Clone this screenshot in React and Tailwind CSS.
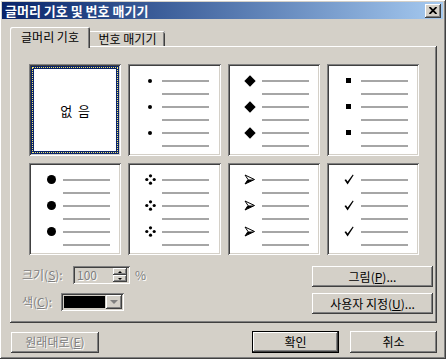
import React from "react";

// 윈도우 클래식 테두리
const raised =
  "shadow-[inset_-1px_-1px_#404040,inset_1px_1px_#ffffff,inset_-2px_-2px_#808080,inset_2px_2px_#d4d0c8]";
const sunken =
  "shadow-[inset_1px_1px_#808080,inset_-1px_-1px_#ffffff,inset_2px_2px_#404040,inset_-2px_-2px_#d4d0c8]";
const disabled = "text-[#808080] [text-shadow:1px_1px_0_#ffffff]";

const kinds = ["none", "dot", "diamond", "square", "circle", "fourdiamond", "arrow", "check"];

function Bullet({ kind }) {
  if (kind === "dot") return <span className="block w-[4px] h-[4px] rounded-full bg-black" />;
  if (kind === "diamond") return <span className="block w-[8px] h-[8px] rotate-45 bg-black" />;
  if (kind === "square") return <span className="block w-[5px] h-[5px] bg-black" />;
  if (kind === "circle") return <span className="block w-[9px] h-[9px] rounded-full bg-black" />;
  if (kind === "fourdiamond")
    return (
      <svg width="11" height="11" viewBox="0 0 11 11">
        <circle cx="5.5" cy="1.8" r="1.6" fill="#000" />
        <circle cx="5.5" cy="9.2" r="1.6" fill="#000" />
        <circle cx="1.8" cy="5.5" r="1.6" fill="#000" />
        <circle cx="9.2" cy="5.5" r="1.6" fill="#000" />
      </svg>
    );
  if (kind === "arrow")
    return (
      <svg width="11" height="11" viewBox="0 0 11 11">
        <path d="M1 1 L10.5 5.5 L1 10 L4 5.5 Z" fill="#fff" stroke="#000" strokeWidth="1" strokeLinejoin="miter" />
        <path d="M4 5.5 L10.5 5.5 L1 10 Z" fill="#000" />
      </svg>
    );
  if (kind === "check")
    return (
      <svg width="10" height="11" viewBox="0 0 10 11">
        <path d="M0.5 6 L2 5.3 L3.6 7.6 L8.8 0.5 L9.6 1.2 L3.6 10.4 Z" fill="#000" />
      </svg>
    );
  return null;
}

function Cell({ kind }) {
  if (kind === "none")
    return (
      <div className={`h-[92px] p-[2px] bg-white ${sunken}`}>
        <div className="h-full p-px bg-[#0a246a]">
          <div className="h-full border border-dotted border-[#f2e86a]">
            <div className="h-full border border-[#0a246a] bg-white flex items-center justify-center text-[13px] text-black tracking-[6px] pl-[6px]">
              없음
            </div>
          </div>
        </div>
      </div>
    );
  return (
    <div className={`h-[92px] p-[2px] bg-white ${sunken}`}>
      <div className="flex flex-col pt-[8px] pl-[12px]">
        {[0, 1, 2, 3, 4, 5].map((i) => (
          <div key={i} className="flex items-center h-[13px]">
            <span className="w-[16px] flex justify-center">{i % 2 === 0 && <Bullet kind={kind} />}</span>
            <span className="ml-[4px] w-[47px] h-[2px] bg-[#a6a6a6]" />
          </div>
        ))}
      </div>
    </div>
  );
}

function Btn({ children, className = "", dim = false, isDefault = false }) {
  const inner = (
    <div
      className={`h-full flex items-center justify-center bg-[#d4d0c8] ${raised} ${dim ? disabled : "text-black"}`}
    >
      {children}
    </div>
  );
  if (isDefault)
    return <div className={`border border-black ${className}`}>{inner}</div>;
  return <div className={className}>{inner}</div>;
}

export default function App() {
  return (
    <div
      className={`w-[446px] h-[359px] bg-[#d4d0c8] flex flex-col pt-[2px] pl-[2px] pr-[3px] pb-[3px] text-[12px] leading-none font-['Noto_Sans_CJK_KR','Noto_Sans',sans-serif] ${raised}`}
    >
      {/* 제목 표시줄 */}
      <div className="h-[17px] flex items-center justify-between pl-[3px] pr-[2px] bg-linear-to-r from-[#0a246a] to-[#a6caf0]">
        <span className="text-white font-bold text-[13px]">글머리 기호 및 번호 매기기</span>
        <div className={`w-[16px] h-[14px] flex items-center justify-center bg-[#d4d0c8] ${raised}`}>
          <svg width="8" height="7" viewBox="0 0 8 7">
            <path d="M0.5 0 L7.5 7 M7.5 0 L0.5 7" stroke="#000" strokeWidth="1.8" />
          </svg>
        </div>
      </div>

      <div className="flex flex-col pl-[8px] pr-[6px] pt-[8px]">
        {/* 탭 */}
        <div className="flex items-end h-[19px]">
          <div className="relative z-10 -mb-[2px] w-[80px] h-[21px] pb-[2px] flex items-center justify-center bg-[#d4d0c8] rounded-t-[2px] shadow-[inset_1px_1px_#ffffff,inset_-1px_0_#404040,inset_-2px_0_#808080]">
            글머리 기호
          </div>
          <div className="w-[75px] h-[15px] flex items-center justify-center bg-[#d4d0c8] rounded-tr-[2px] shadow-[inset_0_1px_#ffffff,inset_-1px_0_#404040,inset_-2px_0_#808080]">
            번호 매기기
          </div>
        </div>

        {/* 탭 패널 */}
        <div className={`h-[277px] flex flex-col pt-[18px] pl-[12px] pr-[4px] ${raised}`}>
          <div className="ml-[7px] w-[390px] grid grid-cols-4 gap-[7px]">
            {kinds.map((k) => (
              <Cell key={k} kind={k} />
            ))}
          </div>

          <div className="mt-[11px] flex justify-between">
            <div className="flex flex-col gap-[9px]">
              <div className="flex items-center h-[18px]">
                <span className={`w-[51px] ${disabled}`}>
                  크기(<u>S</u>):
                </span>
                <div className={`w-[57px] h-[18px] p-[2px] flex items-center bg-[#d4d0c8] ${sunken}`}>
                  <span className={`flex-1 pl-[2px] ${disabled}`}>100</span>
                  <div className="flex flex-col w-[14px] h-[14px] mr-[1px]">
                    <div className={`flex-1 flex items-center justify-center ${raised}`}>
                      <span className="w-0 h-0 border-x-[2px] border-x-transparent border-b-[2px] border-b-black" />
                    </div>
                    <div className={`flex-1 flex items-center justify-center ${raised}`}>
                      <span className="w-0 h-0 border-x-[2px] border-x-transparent border-t-[2px] border-t-black" />
                    </div>
                  </div>
                </div>
                <span className={`ml-[5px] ${disabled}`}>%</span>
              </div>
              <div className="flex items-center h-[18px]">
                <span className={`w-[39px] ${disabled}`}>
                  색(<u>C</u>):
                </span>
                <div className={`w-[63px] h-[18px] p-[2px] flex bg-[#d4d0c8] ${sunken}`}>
                  <div className="flex-1 p-px">
                    <div className="h-full bg-black" />
                  </div>
                  <div className={`w-[16px] flex items-center justify-center ${raised}`}>
                    <span className="w-0 h-0 border-x-[4px] border-x-transparent border-t-[4px] border-t-[#808080]" />
                  </div>
                </div>
              </div>
            </div>

            <div className="flex flex-col gap-[6px]">
              <Btn className="w-[121px] h-[21px]">
                그림(<u>P</u>)...
              </Btn>
              <Btn className="w-[121px] h-[21px]">
                사용자 지정(<u>U</u>)...
              </Btn>
            </div>
          </div>
        </div>

        {/* 하단 버튼 */}
        <div className="mt-[8px] flex items-center">
          <Btn dim className="ml-px w-[88px] h-[21px]">
            원래대로(<u>E</u>)
          </Btn>
          <Btn isDefault className="ml-auto w-[87px] h-[22px]">
            확인
          </Btn>
          <Btn className="ml-[11px] w-[87px] h-[22px]">취소</Btn>
        </div>
      </div>
    </div>
  );
}
